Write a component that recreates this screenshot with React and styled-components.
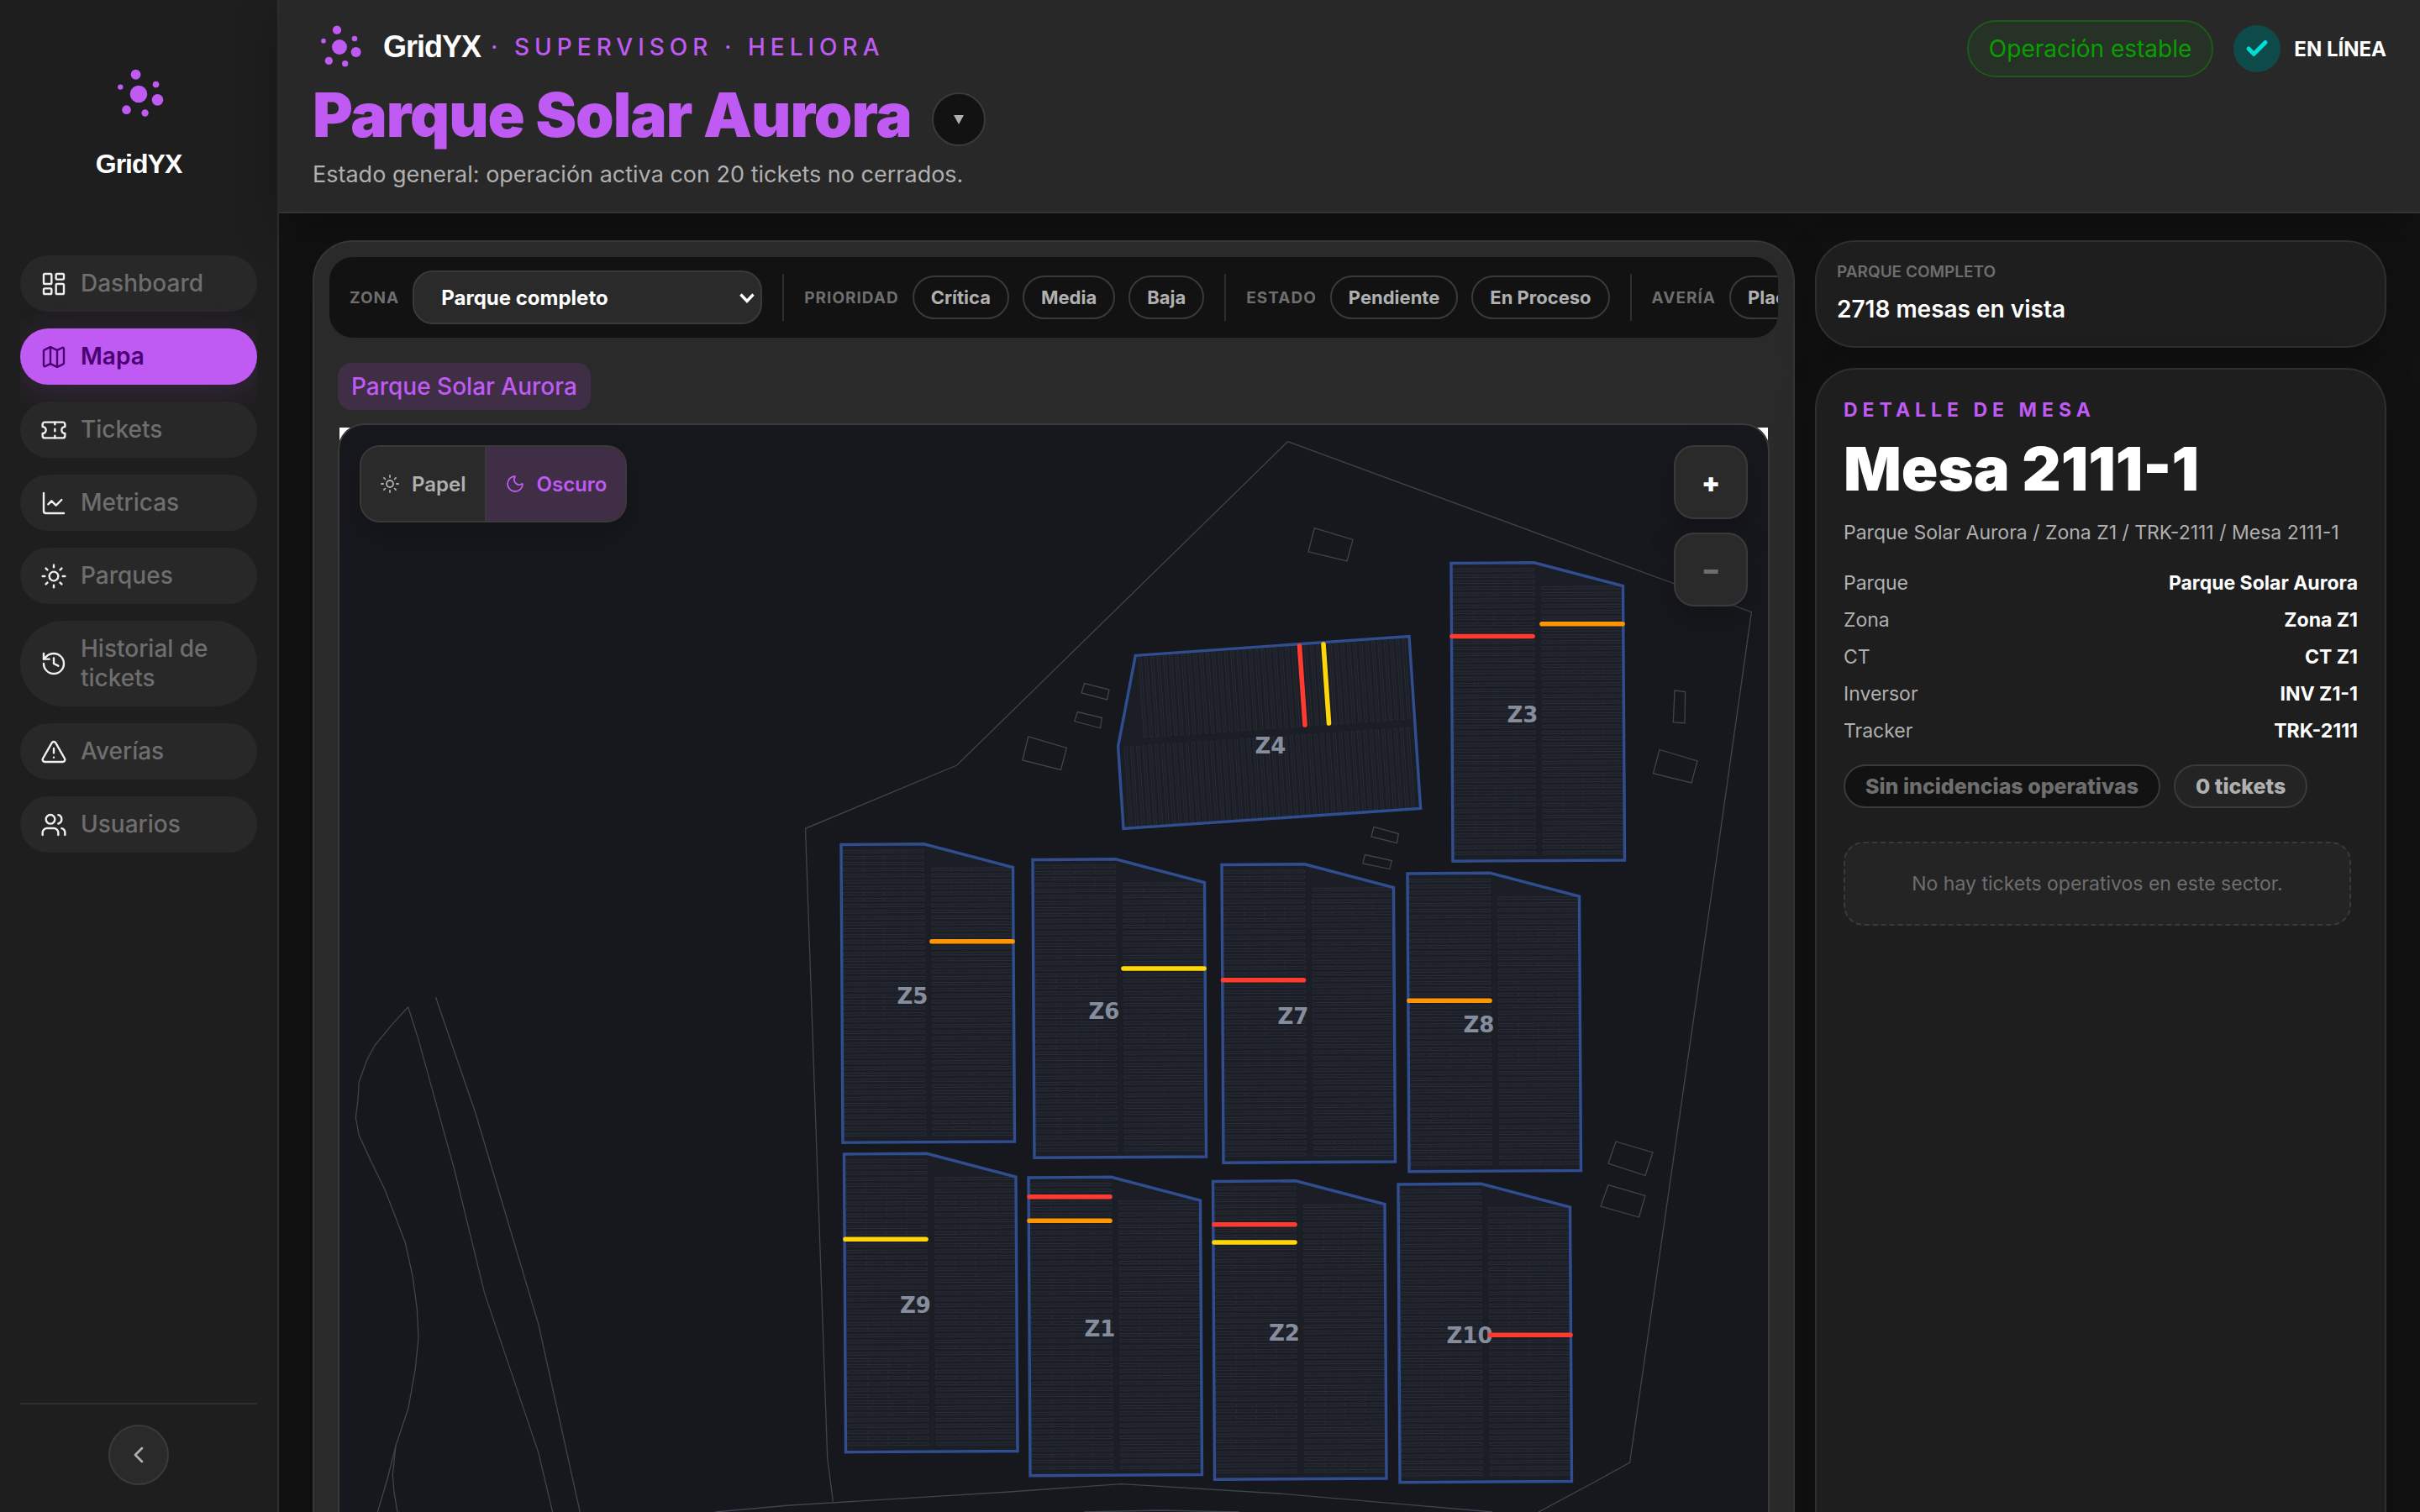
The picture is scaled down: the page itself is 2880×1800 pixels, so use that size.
import React from 'react'
import styled, { createGlobalStyle } from 'styled-components'
import {
  Check,
  ChevronLeft,
  ChartLine,
  History,
  LayoutDashboard,
  Map as MapIcon,
  Moon,
  Sun,
  Ticket,
  TriangleAlert,
  Users,
} from 'lucide-react'

const color = {
  page: '#121212',
  sidebar: '#1e1e1e',
  surface: '#282828',
  panel: '#2a2a2a',
  line: '#2f2f2f',
  border: '#3a3a3a',
  text: '#ffffff',
  soft: '#b0b0b0',
  muted: '#6e6e6e',
  accent: '#bf5af2',
  accentBg: '#402e47',
}

const severity = {
  critica: '#ff3b30',
  media: '#ff9500',
  baja: '#ffd60a',
}

const NAV = [
  [LayoutDashboard, 'Dashboard'],
  [MapIcon, 'Mapa'],
  [Ticket, 'Tickets'],
  [ChartLine, 'Metricas'],
  [Sun, 'Parques'],
  [History, 'Historial de tickets'],
  [TriangleAlert, 'Averías'],
  [Users, 'Usuarios'],
]

const FILTERS = [
  ['Prioridad', ['Crítica', 'Media', 'Baja']],
  ['Estado', ['Pendiente', 'En Proceso']],
  ['Avería', ['Placa']],
]

const DETAILS = [
  ['Parque', 'Parque Solar Aurora'],
  ['Zona', 'Zona Z1'],
  ['CT', 'CT Z1'],
  ['Inversor', 'INV Z1-1'],
  ['Tracker', 'TRK-2111'],
]

// every zone but Z4 shares one outline, placed by its top left corner
const ZONES = [
  ['Z3', 1727, 670.5],
  ['Z5', 1001, 1005.5],
  ['Z6', 1229, 1023.5],
  ['Z7', 1454, 1029.5],
  ['Z8', 1675, 1040],
  ['Z9', 1004.5, 1374],
  ['Z1', 1224, 1402],
  ['Z2', 1443.5, 1406.5],
  ['Z10', 1664, 1410],
]

const INCIDENTS = [
  ['critica', 1728, 757.5, 1824, 757.5],
  ['media', 1835, 742.7, 1931, 742.7],
  ['critica', 1546.5, 769, 1553, 863],
  ['baja', 1575, 767, 1581.5, 861],
  ['media', 1109, 1120.7, 1205, 1120.7],
  ['baja', 1337, 1153, 1433, 1153],
  ['critica', 1455.5, 1166.7, 1551.5, 1166.7],
  ['media', 1677, 1191.3, 1773, 1191.3],
  ['baja', 1006, 1475.3, 1102, 1475.3],
  ['critica', 1225, 1424.7, 1321, 1424.7],
  ['media', 1225, 1453.3, 1321, 1453.3],
  ['critica', 1445, 1457.7, 1541, 1457.7],
  ['baja', 1445, 1479, 1541, 1479],
  ['critica', 1773, 1589.3, 1869, 1589.3],
]

const TERRAIN = [
  'M1532.5 525.7 2084.4 728.6 2037.5 1060 1939.6 1741 1900 1763 1831 1800',
  'M1532.5 525.7 1138.7 911 958.5 986.3 984.7 1735.8 991.4 1787.5',
  'M851 1800 940 1792 1194 1776.5 1335 1766.6 1521.6 1778 1776 1800',
  'M1290 1800 1380 1798 1475 1800',
  'M485.7 1198.8 466 1220.4 446 1244.5 436.7 1262 427.3 1287.8 426 1309 423.3 1330.6 427.3 1351.8 442.9 1385.3 458 1416.3 470.2 1447.8 482.4 1479.6 491 1519.2 496.3 1558 498 1592.7 494.3 1629.4 486 1676.3 471 1721.2 461.2 1760 449.4 1800',
  'M471 1721.2 467.3 1756 469 1776.3 473 1800',
  'M485.7 1198.8 498 1237.6 540.8 1392.7 576.7 1539.6 640.8 1729.4 657.6 1800',
  'M518.4 1187 565.3 1323.3 640.8 1576.3 690.2 1800',
  'M1564.4 628.6 1610 642.5 1603 668 1557 656.8z',
  'M1290.6 813.6 1320 821 1317.5 832.9 1287 825z',
  'M1282.5 847.5 1311.3 854.6 1309.4 866.8 1278.8 858.6z',
  'M1223.8 876.8 1269.4 890.4 1262.5 916.4 1216.9 905z',
  'M1993 822 2005.6 823.6 2005 860.7 1991.3 860z',
  'M1975 892.5 2020 906 2013 932 1967.5 920.7z',
  'M1635 984.3 1664.4 992.5 1662.5 1003.6 1631.9 996z',
  'M1624.4 1017.5 1656.3 1024.6 1653.8 1034.6 1621.9 1027.9z',
  'M1923 1359 1967 1372 1958 1399.5 1914 1385z',
  'M1914 1410.6 1958 1423.4 1950.5 1449 1905 1436z',
]

const ZONE_OUTLINE = 'M0 0 98.5 -0.7 204.5 27 206.5 353.5 2 354.7z'
const Z4_OUTLINE =
  'M1351.3 780.4 1677 757.5 1690.6 962.5 1337 986.4 1330.6 888.6z'

const ROW_PITCH = 7.17

// one tracker is a thin strip of four modules
const rowPath = (x, y) =>
  `M${x} ${y - 1.5} l96 -0.5 v3 l-96 0.5z M${x + 24} ${y - 1} v2 M${x +
    48} ${y - 1} v2 M${x + 72} ${y - 1} v2`

const zoneRows = () => {
  const rows = []
  for (let k = 1; k < 49; k++) {
    const y = 1.2 + k * ROW_PITCH
    const shear = (y * 2) / 354
    rows.push(rowPath(2.5 + shear, y))
    if (k > 3) rows.push(rowPath(107.5 + shear, y - 0.5))
  }
  return rows.join(' ')
}

const z4Rows = () => {
  const rows = []
  for (let i = 0; i < 44; i++) {
    const x = 1355 + i * 7.3
    rows.push(`M${x} ${783 - i * 0.51} l6.5 95 h3 l-6.5 -95z`)
  }
  for (let i = 0; i < 47; i++) {
    const x = 1338 + i * 7.3
    rows.push(`M${x} ${889 - i * 0.49} l6.5 95 h3 l-6.5 -95z`)
  }
  return rows.join(' ')
}

const ZONE_ROWS = zoneRows()
const Z4_ROWS = z4Rows()

const LogoMark = ({ size }) => (
  <svg
    width={size}
    height={size}
    viewBox="108 84 168 168"
    fill={color.accent}
    aria-hidden="true"
  >
    <circle cx="183" cy="107" r="15.5" />
    <circle cx="135" cy="146" r="8.5" />
    <circle cx="246" cy="138" r="10" />
    <circle cx="192" cy="168" r="27" />
    <circle cx="251" cy="186" r="18" />
    <circle cx="154" cy="217" r="14" />
    <circle cx="212" cy="227" r="11" />
  </svg>
)

const Zone = ({ name, x, y }) => (
  <g transform={`translate(${x} ${y})`}>
    <path d={ZONE_OUTLINE} fill="#1b1e25" />
    <path d={ZONE_ROWS} fill="#1c1f27" stroke="#2d313c" strokeWidth="0.8" />
    <path d={ZONE_OUTLINE} fill="none" stroke="#2a4f9f" strokeWidth="3.4" />
    <path d={ZONE_OUTLINE} fill="none" stroke="#3d4c78" strokeWidth="1.2" />
    <ZoneLabel x="85" y="189">
      {name}
    </ZoneLabel>
  </g>
)

const ParkMap = () => (
  <MapSvg
    viewBox="404 506 1700 1400"
    role="img"
    aria-label="Mapa de Parque Solar Aurora"
  >
    <g fill="none" stroke="#3e4450" strokeWidth="1.3">
      {TERRAIN.map(d => (
        <path key={d} d={d} />
      ))}
    </g>
    <path d={Z4_OUTLINE} fill="#1b1e25" />
    <path d={Z4_ROWS} fill="#1c1f27" stroke="#2b2f39" strokeWidth="0.8" />
    <path d={Z4_OUTLINE} fill="none" stroke="#2a4f9f" strokeWidth="3.4" />
    <path d={Z4_OUTLINE} fill="none" stroke="#3d4c78" strokeWidth="1.2" />
    <ZoneLabel x="1512" y="897">
      Z4
    </ZoneLabel>
    {ZONES.map(([name, x, y]) => (
      <Zone key={name} name={name} x={x} y={y} />
    ))}
    <g strokeWidth="5.6" strokeLinecap="round">
      {INCIDENTS.map(([level, x1, y1, x2, y2]) => (
        <line
          key={`${x1}-${y1}`}
          x1={x1}
          y1={y1}
          x2={x2}
          y2={y2}
          stroke={severity[level]}
        />
      ))}
    </g>
  </MapSvg>
)

const Sidebar = () => (
  <SidebarBox>
    <SidebarBrand>
      <LogoMark size={64} />
      <BrandName $size={32}>GridYX</BrandName>
    </SidebarBrand>
    <Nav aria-label="Principal">
      {NAV.map(([Icon, label]) => (
        <NavItem key={label} href="#" $active={label === 'Mapa'}>
          <Icon size={32} strokeWidth={1.8} />
          <span>{label}</span>
        </NavItem>
      ))}
    </Nav>
    <SidebarFooter>
      <CollapseButton aria-label="Contraer menú">
        <ChevronLeft size={32} />
      </CollapseButton>
    </SidebarFooter>
  </SidebarBox>
)

const Header = () => (
  <HeaderBox>
    <div>
      <BrandRow>
        <LogoMark size={56} />
        <BrandText>
          <BrandName $size={36}>GridYX</BrandName>
          <Role>· SUPERVISOR · HELIORA</Role>
        </BrandText>
      </BrandRow>
      <TitleRow>
        <Title>Parque Solar Aurora</Title>
        <ParkButton aria-label="Cambiar de parque">
          <svg width="12" height="11" viewBox="0 0 12 11" fill="currentColor">
            <path d="M0 0h12L6 11z" />
          </svg>
        </ParkButton>
      </TitleRow>
      <Subtitle>
        Estado general: operación activa con 20 tickets no cerrados.
      </Subtitle>
    </div>
    <Status>
      <StatusPill>Operación estable</StatusPill>
      <Online>
        <OnlineIcon>
          <Check size={30} strokeWidth={4} />
        </OnlineIcon>
        EN LÍNEA
      </Online>
    </Status>
  </HeaderBox>
)

const FilterBar = () => (
  <Filters>
    <FilterLabel as="label" htmlFor="zona">
      Zona
    </FilterLabel>
    <SelectWrap>
      <ZoneSelect id="zona" defaultValue="all">
        <option value="all">Parque completo</option>
        {ZONES.map(([name]) => (
          <option key={name}>{name}</option>
        ))}
      </ZoneSelect>
      <svg width="20" height="14" viewBox="0 0 20 14" aria-hidden="true">
        <path
          d="M2.5 2.5 10 10.5 17.5 2.5"
          fill="none"
          stroke="#fff"
          strokeWidth="3.4"
        />
      </svg>
    </SelectWrap>
    {FILTERS.map(([title, options]) => (
      <FilterGroup key={title}>
        <FilterLabel>{title}</FilterLabel>
        {options.map(option => (
          <FilterButton key={option}>{option}</FilterButton>
        ))}
      </FilterGroup>
    ))}
  </Filters>
)

const MapPanel = () => (
  <Panel>
    <FilterBar />
    <PanelBody>
      <Crumb href="#">Parque Solar Aurora</Crumb>
      <MapWrap>
        <MapFrame>
          <ParkMap />
          <ThemeSwitch>
            <ThemeButton>
              <Sun size={24} strokeWidth={1.8} />
              Papel
            </ThemeButton>
            <ThemeButton $active>
              <Moon size={24} strokeWidth={1.8} />
              Oscuro
            </ThemeButton>
          </ThemeSwitch>
          <ZoomControls>
            <ZoomButton aria-label="Acercar">+</ZoomButton>
            <ZoomButton aria-label="Alejar" disabled>
              −
            </ZoomButton>
          </ZoomControls>
        </MapFrame>
      </MapWrap>
    </PanelBody>
  </Panel>
)

const DetailColumn = () => (
  <Column>
    <SummaryCard>
      <SummaryLabel>Parque completo</SummaryLabel>
      <SummaryValue>2718 mesas en vista</SummaryValue>
    </SummaryCard>
    <DetailCard>
      <Eyebrow>DETALLE DE MESA</Eyebrow>
      <DetailTitle>Mesa 2111-1</DetailTitle>
      <DetailPath>
        Parque Solar Aurora / Zona Z1 / TRK-2111 / Mesa 2111-1
      </DetailPath>
      <DetailList>
        {DETAILS.map(([term, value]) => (
          <DetailRow key={term}>
            <dt>{term}</dt>
            <dd>{value}</dd>
          </DetailRow>
        ))}
      </DetailList>
      <Tags>
        <Tag $dark>Sin incidencias operativas</Tag>
        <Tag>0 tickets</Tag>
      </Tags>
      <EmptyBox>No hay tickets operativos en este sector.</EmptyBox>
    </DetailCard>
  </Column>
)

const App = () => (
  <>
    <GlobalStyle />
    <Page>
      <Sidebar />
      <Content>
        <Header />
        <Workspace>
          <MapPanel />
          <DetailColumn />
        </Workspace>
      </Content>
    </Page>
  </>
)

const GlobalStyle = createGlobalStyle`
  *,
  *::before,
  *::after {
    box-sizing: border-box;
  }
  body {
    margin: 0;
    background: ${color.page};
    color: ${color.text};
    font-family: Inter, 'Liberation Sans', sans-serif;
    font-size: 24px;
  }
  button,
  select {
    font: inherit;
    color: inherit;
    cursor: pointer;
  }
  a {
    text-decoration: none;
  }
  h1,
  h2,
  p,
  dl,
  dd {
    margin: 0;
  }
  svg {
    flex: none;
  }
`

const Page = styled.div`
  display: flex;
  height: 100vh;
  overflow: hidden;
`

const SidebarBox = styled.aside`
  width: 332px;
  flex: none;
  display: flex;
  flex-direction: column;
  padding: 80px 24px 32px;
  background: ${color.sidebar};
  border-right: 2px solid ${color.line};
`

const SidebarBrand = styled.div`
  display: flex;
  flex-direction: column;
  align-items: center;
  gap: 32px;
  margin-bottom: 90px;
`

const BrandName = styled.span`
  font-family: 'Liberation Sans', Arial, sans-serif;
  font-size: ${props => props.$size}px;
  line-height: 38px;
  font-weight: 700;
  letter-spacing: -1px;
  color: ${color.text};
`

const Nav = styled.nav`
  display: flex;
  flex-direction: column;
  gap: 20px;
  overflow: hidden;
`

const NavItem = styled.a`
  display: flex;
  align-items: center;
  gap: 16px;
  padding: 16px 24px;
  border-radius: 51px;
  font-size: 28px;
  line-height: 35px;
  font-weight: ${props => (props.$active ? 600 : 500)};
  color: ${props => (props.$active ? '#4a0072' : color.muted)};
  background: ${props => (props.$active ? color.accent : color.surface)};
  box-shadow: ${props =>
    props.$active ? '0 8px 40px rgba(191, 90, 242, 0.16)' : 'none'};

  svg {
    color: ${props => (props.$active ? '#4a0072' : '#f0f0f0')};
  }
`

const SidebarFooter = styled.div`
  margin-top: auto;
  padding-top: 24px;
  border-top: 2px solid ${color.line};
  display: flex;
  justify-content: center;
`

const RoundButton = styled.button`
  display: flex;
  align-items: center;
  justify-content: center;
  padding: 0;
  border: 2px solid ${color.border};
  border-radius: 50%;
  color: ${color.soft};
`

const CollapseButton = styled(RoundButton)`
  width: 72px;
  height: 72px;
  background: ${color.panel};
`

const Content = styled.div`
  flex: 1;
  min-width: 0;
  display: flex;
  flex-direction: column;
`

const HeaderBox = styled.header`
  display: flex;
  justify-content: space-between;
  align-items: flex-start;
  padding: 24px 40px;
  background: ${color.surface};
  border-bottom: 2px solid #333;
  box-shadow: 0 16px 48px rgba(0, 0, 0, 0.25);
`

const BrandRow = styled.div`
  display: flex;
  align-items: center;
  gap: 24px;
  height: 64px;
  margin: 0 0 16px 4px;
`

const BrandText = styled.div`
  display: flex;
  align-items: center;
  gap: 12px;
`

const Role = styled.span`
  font-size: 28px;
  line-height: 36px;
  font-weight: 500;
  letter-spacing: 6px;
  color: ${color.accent};
`

const TitleRow = styled.div`
  display: flex;
  gap: 24px;
  height: 70px;
`

const Title = styled.h1`
  font-size: 73px;
  line-height: 66px;
  font-weight: 900;
  letter-spacing: -1px;
  color: ${color.accent};
`

const ParkButton = styled(RoundButton)`
  align-self: flex-end;
  width: 64px;
  height: 64px;
  background: ${color.page};
`

const Subtitle = styled.p`
  margin-top: 14px;
  font-size: 27px;
  line-height: 40px;
  color: ${color.soft};
`

const Status = styled.div`
  display: flex;
  align-items: center;
  gap: 24px;
`

const StatusPill = styled.span`
  padding: 14px 24px;
  border: 2px solid #1c5a1c;
  border-radius: 34px;
  background: #263226;
  font-size: 28px;
  line-height: 36px;
  color: #0a9f00;
`

const Online = styled.span`
  display: flex;
  align-items: center;
  gap: 16px;
  font-size: 24px;
  font-weight: 700;
`

const OnlineIcon = styled.span`
  display: flex;
  align-items: center;
  justify-content: center;
  width: 56px;
  height: 56px;
  border-radius: 50%;
  background: #0e4a4a;
  color: #00ddd5;
`

const Workspace = styled.main`
  flex: 1;
  min-height: 0;
  display: grid;
  grid-template-columns: minmax(0, 1fr) 680px;
  gap: 24px;
  padding: 32px 40px 0;
  overflow: hidden;
`

const Panel = styled.section`
  padding: 18px 18px 0;
  border: 2px solid #363636;
  border-bottom: 0;
  border-radius: 48px 48px 0 0;
  background: ${color.panel};
  box-shadow: 0 16px 48px rgba(0, 0, 0, 0.25);
`

const Filters = styled.div`
  display: flex;
  align-items: center;
  gap: 16px;
  height: 96px;
  padding: 0 24px;
  border-radius: 28px;
  background: ${color.page};
  overflow: hidden;
`

const FilterLabel = styled.span`
  flex: none;
  font-size: 19px;
  font-weight: 700;
  letter-spacing: 1px;
  text-transform: uppercase;
  color: ${color.muted};
`

const SelectWrap = styled.div`
  position: relative;
  flex: none;
  margin-right: 8px;

  svg {
    position: absolute;
    right: 8px;
    top: 26px;
    pointer-events: none;
  }
`

const ZoneSelect = styled.select`
  appearance: none;
  width: 416px;
  height: 64px;
  padding: 0 32px;
  border: 2px solid ${color.border};
  border-radius: 24px;
  background: ${color.panel};
  font-weight: 700;
`

const FilterGroup = styled.div`
  flex: none;
  display: flex;
  align-items: center;
  gap: 16px;
  height: 56px;
  padding: 0 8px 0 24px;
  border-left: 2px solid ${color.line};
`

const FilterButton = styled.button`
  height: 52px;
  padding: 0 20px;
  border: 2px solid ${color.border};
  border-radius: 26px;
  background: transparent;
  font-size: 22px;
  font-weight: 700;
  color: ${color.soft};
`

const PanelBody = styled.div`
  display: flex;
  flex-direction: column;
  align-items: flex-start;
  gap: 16px;
  padding: 30px 10px 0;
`

const Crumb = styled.a`
  padding: 10px 16px;
  border-radius: 16px;
  background: ${color.accentBg};
  font-size: 28px;
  line-height: 36px;
  font-weight: 500;
  color: ${color.accent};
`

const MapWrap = styled.div`
  width: 100%;
  background: linear-gradient(#fff, #fff) no-repeat center 5px;
  background-size: calc(100% - 4px) 20px;
`

const MapFrame = styled.div`
  position: relative;
  border: 2px solid ${color.border};
  border-radius: 32px;
  background: #17181d;
  overflow: hidden;
`

const MapSvg = styled.svg`
  display: block;
  width: 100%;
`

const ZoneLabel = styled.text`
  font-family: 'DejaVu Sans', sans-serif;
  font-size: 26px;
  font-weight: 700;
  text-anchor: middle;
  fill: #868e9e;
`

const ThemeSwitch = styled.div`
  position: absolute;
  top: 24px;
  left: 24px;
  display: flex;
  height: 92px;
  border: 2px solid ${color.border};
  border-radius: 24px;
  background: ${color.panel};
  box-shadow: 0 16px 40px rgba(0, 0, 0, 0.2);
  overflow: hidden;
`

const ThemeButton = styled.button`
  display: flex;
  align-items: center;
  gap: 14px;
  padding: 0 22px;
  border: 0;
  background: ${props => (props.$active ? color.accentBg : color.panel)};
  font-weight: 600;
  color: ${props => (props.$active ? color.accent : color.soft)};

  & + & {
    border-left: 2px solid ${color.border};
  }
`

const ZoomControls = styled.div`
  position: absolute;
  top: 24px;
  right: 24px;
  display: flex;
  flex-direction: column;
  gap: 16px;
`

const ZoomButton = styled.button`
  width: 88px;
  height: 88px;
  padding: 0;
  border: 2px solid ${color.border};
  border-radius: 24px;
  background: ${color.panel};
  box-shadow: 0 16px 40px rgba(0, 0, 0, 0.2);
  font-size: 32px;
  font-weight: 900;

  &:disabled {
    color: ${color.muted};
  }
`

const Column = styled.div`
  display: flex;
  flex-direction: column;
  gap: 24px;
`

const Card = styled.section`
  border: 2px solid ${color.line};
  border-radius: 48px;
  background: ${color.sidebar};
  box-shadow: 0 16px 48px rgba(0, 0, 0, 0.25);
`

const SummaryCard = styled(Card)`
  height: 128px;
  padding: 22px 24px;
`

const SummaryLabel = styled.p`
  font-size: 19px;
  line-height: 28px;
  font-weight: 600;
  text-transform: uppercase;
  color: ${color.muted};
`

const SummaryValue = styled.p`
  margin-top: 10px;
  font-size: 28px;
  line-height: 40px;
  font-weight: 600;
`

const DetailCard = styled(Card)`
  flex: 1;
  padding: 32px;
  border-bottom: 0;
  border-radius: 48px 48px 0 0;
`

const Eyebrow = styled.p`
  font-size: 23px;
  line-height: 32px;
  font-weight: 700;
  letter-spacing: 6px;
  color: ${color.accent};
`

const DetailTitle = styled.h2`
  margin-top: 14px;
  font-size: 72px;
  line-height: 80px;
  font-weight: 900;
`

const DetailPath = styled.p`
  margin: 20px 0 22px;
  font-size: 23px;
  line-height: 32px;
  color: ${color.soft};
`

const DetailList = styled.dl`
  display: flex;
  flex-direction: column;
`

const DetailRow = styled.div`
  display: flex;
  justify-content: space-between;
  font-size: 23px;
  line-height: 44px;

  dt {
    color: ${color.soft};
  }
  dd {
    font-weight: 700;
  }
`

const Tags = styled.div`
  display: flex;
  gap: 16px;
  margin-top: 18px;
`

const Tag = styled.span`
  padding: 8px 24px;
  border: 2px solid ${color.border};
  border-radius: 26px;
  background: ${props => (props.$dark ? color.page : '#242424')};
  font-size: 25px;
  line-height: 32px;
  font-weight: 800;
  color: ${props => (props.$dark ? color.muted : color.soft)};
`

const EmptyBox = styled.p`
  margin: 40px 8px 0 0;
  padding: 32px;
  border: 2px dashed ${color.border};
  border-radius: 24px;
  background: #242424;
  font-size: 23px;
  line-height: 32px;
  text-align: center;
  color: ${color.muted};
`

export default App
